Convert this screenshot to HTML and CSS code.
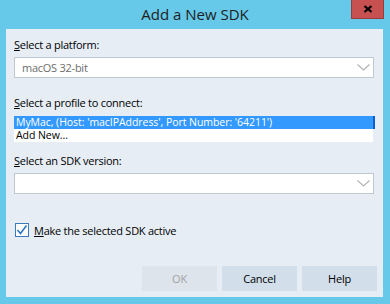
FILE: index.html
```html
<!DOCTYPE html>
<html lang="en">
<head>
  <meta charset="UTF-8">
  <title>Add a New SDK</title>
  <link rel="stylesheet" href="styles.css">
</head>
<body>

  <div class="window">
    <div class="titlebar">
      <span></span>
      <span class="title">Add a New SDK</span>
      <button class="close" aria-label="Close">
        <svg width="10" height="8" viewBox="0 0 10 8">
          <path d="M1.5 1 L8.5 7 M8.5 1 L1.5 7" stroke="#000" stroke-width="2.2" fill="none"/>
        </svg>
      </button>
    </div>

    <div class="client">
      <label class="field-label"><u>S</u>elect a platform:</label>
      <div class="combo">
        <span class="combo-text">macOS 32-bit</span>
        <svg class="chevron" width="13" height="7" viewBox="0 0 13 7">
          <path d="M0.5 0.5 L6.5 6 L12.5 0.5" stroke="#b4b4b4" stroke-width="1.2" fill="none"/>
        </svg>
      </div>

      <label class="field-label profile-label"><u>S</u>elect a profile to connect:</label>
      <ul class="listbox">
        <li class="selected">MyMac, (Host: 'macIPAddress', Port Number: '64211')</li>
        <li>Add New...</li>
      </ul>

      <label class="field-label version-label"><u>S</u>elect an SDK version:</label>
      <div class="combo">
        <span class="combo-text"></span>
        <svg class="chevron" width="13" height="7" viewBox="0 0 13 7">
          <path d="M0.5 0.5 L6.5 6 L12.5 0.5" stroke="#b4b4b4" stroke-width="1.2" fill="none"/>
        </svg>
      </div>

      <div class="check-row">
        <span class="checkbox">
          <svg width="12" height="12" viewBox="0 0 12 12">
            <path d="M1.5 6 L4.5 9.5 L10.5 1.5" stroke="#2a74c6" stroke-width="1.6" fill="none"/>
          </svg>
        </span>
        <span><u>M</u>ake the selected SDK active</span>
      </div>

      <div class="buttons">
        <button class="btn disabled">OK</button>
        <button class="btn">Cancel</button>
        <button class="btn">Help</button>
      </div>
    </div>
  </div>

</body>
</html>
```

FILE: styles.css
```css
body {
  margin: 0;
  font-family: 'Open Sans', 'Noto Sans', sans-serif;
  font-size: 11px;
  letter-spacing: -0.25px;
  color: #000;
}

.window {
  width: 390px;
  height: 304px;
  background-color: #66c9e9;
}

.titlebar {
  height: 29px;
  display: grid;
  grid-template-columns: 1fr auto 1fr;
  align-items: start;
}

.title {
  font-size: 15px;
  line-height: 28px;
  letter-spacing: 0;
  color: #1e1e1e;
}

.close {
  justify-self: end;
  margin-right: 6px;
  width: 33px;
  height: 19px;
  padding: 0;
  border: 1px solid #9c3b3b;
  border-top: none;
  background-color: #c75050;
  display: flex;
  align-items: center;
  justify-content: center;
}

.client {
  margin: 0 7px 0 6px;
  height: 268px;
  box-sizing: border-box;
  padding: 8px 9px 6px 8px;
  background-color: #e6edf5;
  display: flex;
  flex-direction: column;
}

.field-label {
  display: block;
  line-height: 15px;
  margin-bottom: 5px;
}

.profile-label {
  margin-top: 17px;
  margin-bottom: 6px;
}

.version-label {
  margin-top: 11px;
}

.combo {
  height: 21px;
  box-sizing: border-box;
  border: 1px solid #bfc9d2;
  background: #fff;
  display: flex;
  align-items: center;
  justify-content: space-between;
  padding: 0 3px 0 7px;
}

.combo-text {
  color: #6d6d6d;
}

.listbox {
  list-style: none;
  margin: 0 1px 0 0;
  padding: 0;
  background: #fff;
  height: 26px;
}

.listbox li {
  height: 13px;
  line-height: 13px;
  font-size: 10.5px;
  letter-spacing: -0.05px;
  padding-left: 2px;
  white-space: nowrap;
  overflow: hidden;
}

.listbox .selected {
  background-color: #3399ff;
  color: #fff;
  border-right: 2px solid #0b5fcf;
  margin-right: -2px;
}

.check-row {
  margin-top: 29px;
  display: flex;
  align-items: center;
  gap: 5px;
  height: 14px;
  padding-left: 1px;
}

.checkbox {
  width: 14px;
  height: 14px;
  box-sizing: border-box;
  border: 1px solid #3d7ab8;
  background: #fff;
  display: flex;
  align-items: center;
  justify-content: center;
}

.buttons {
  margin-top: auto;
  display: flex;
  justify-content: flex-end;
  gap: 5px;
  margin-right: -3px;
}

.btn {
  width: 75px;
  height: 25px;
  border: none;
  background-color: #d2deea;
  font-family: inherit;
  font-size: 11px;
  letter-spacing: -0.25px;
  color: #000;
  padding: 0;
}

.btn.disabled {
  background-color: #dde4ec;
  color: #a3a3a3;
}
```
